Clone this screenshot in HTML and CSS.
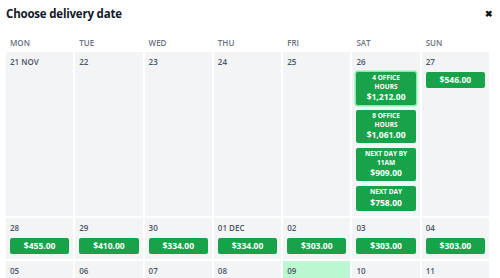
FILE: index.html
```html
<!DOCTYPE html>
<html lang="en">
<head>
    <meta charset="UTF-8">
    <meta name="viewport" content="width=device-width, initial-scale=1.0">
    <title>Choose delivery date</title>
    <link rel="stylesheet" href="styles.css">
</head>
<body>
    <div class="modal">
        <div class="modal-header">
            <h2>Choose delivery date</h2>
            <span class="close">&#x2716;</span>
        </div>
        <div class="weekdays">
            <div>MON</div><div>TUE</div><div>WED</div><div>THU</div><div>FRI</div><div>SAT</div><div>SUN</div>
        </div>
        <div class="calendar">
            <div class="day"><div class="date">21 NOV</div></div>
            <div class="day"><div class="date">22</div></div>
            <div class="day"><div class="date">23</div></div>
            <div class="day"><div class="date">24</div></div>
            <div class="day"><div class="date">25</div></div>
            <div class="day">
                <div class="date">26</div>
                <button class="slot active"><span class="label">4 OFFICE<br>HOURS</span><span class="price">$1,212.00</span></button>
                <button class="slot"><span class="label">8 OFFICE<br>HOURS</span><span class="price">$1,061.00</span></button>
                <button class="slot"><span class="label">NEXT DAY BY<br>11AM</span><span class="price">$909.00</span></button>
                <button class="slot"><span class="label">NEXT DAY</span><span class="price">$758.00</span></button>
            </div>
            <div class="day">
                <div class="date">27</div>
                <button class="slot"><span class="price">$546.00</span></button>
            </div>

            <div class="day"><div class="date">28</div><button class="slot"><span class="price">$455.00</span></button></div>
            <div class="day"><div class="date">29</div><button class="slot"><span class="price">$410.00</span></button></div>
            <div class="day"><div class="date">30</div><button class="slot"><span class="price">$334.00</span></button></div>
            <div class="day"><div class="date">01 DEC</div><button class="slot"><span class="price">$334.00</span></button></div>
            <div class="day"><div class="date">02</div><button class="slot"><span class="price">$303.00</span></button></div>
            <div class="day"><div class="date">03</div><button class="slot"><span class="price">$303.00</span></button></div>
            <div class="day"><div class="date">04</div><button class="slot"><span class="price">$303.00</span></button></div>

            <div class="day"><div class="date">05</div></div>
            <div class="day"><div class="date">06</div></div>
            <div class="day"><div class="date">07</div></div>
            <div class="day"><div class="date">08</div></div>
            <div class="day selected"><div class="date">09</div></div>
            <div class="day"><div class="date">10</div></div>
            <div class="day"><div class="date">11</div></div>
        </div>
    </div>
</body>
</html>
```

FILE: styles.css
```css
body {
    margin: 0;
    background: white;
    font-family: "Open Sans", Arial, sans-serif;
    color: #111827;
}
.modal {
    padding: 0 11px 0 6px;
}
.modal-header {
    display: flex;
    justify-content: space-between;
    align-items: center;
    height: 26px;
}
.modal-header h2 {
    margin: 0;
    font-size: 11.5px;
    font-weight: 700;
    letter-spacing: -0.2px;
}
.close {
    font-size: 9px;
    font-weight: 700;
    color: #111;
    margin-right: -4px;
}
.weekdays {
    display: grid;
    grid-template-columns: repeat(7, 1fr);
    gap: 2px;
    height: 26px;
    align-items: center;
    padding-top: 6px;
    box-sizing: border-box;
}
.weekdays div {
    padding-left: 4px;
    font-size: 8px;
    font-weight: 600;
    color: #6b7280;
}
.calendar {
    display: grid;
    grid-template-columns: repeat(7, 1fr);
    gap: 2px;
}
.day {
    background-color: #f3f4f6;
    padding: 4px 4px 5px;
    display: flex;
    flex-direction: column;
    gap: 5px;
    min-height: 12px;
}
.day.selected {
    background-color: #bbf7d0;
}
.date {
    font-size: 8px;
    font-weight: 600;
    color: #4b5563;
    line-height: 12px;
    margin-bottom: -1px;
}
.slot {
    border: none;
    border-radius: 2px;
    background-color: #18a34a;
    color: white;
    font-family: inherit;
    padding: 2px 2px 2px;
    margin: 0;
    display: flex;
    flex-direction: column;
    align-items: center;
    cursor: pointer;
}
.slot.active {
    box-shadow: 0 0 0 1.5px #86efac;
}
.label {
    font-size: 6.5px;
    font-weight: 700;
    line-height: 8.5px;
}
.price {
    font-size: 8.5px;
    font-weight: 700;
    line-height: 12px;
}
```
